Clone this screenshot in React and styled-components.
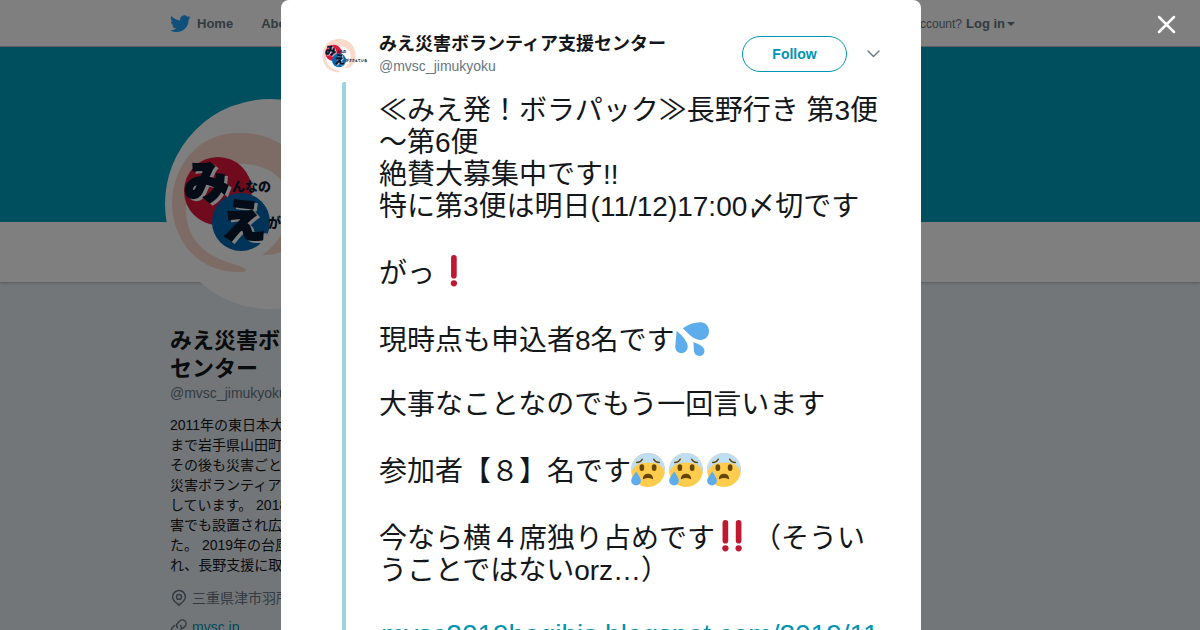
import React from "react";
import styled, { createGlobalStyle } from "styled-components";

const Global = createGlobalStyle`
  *, *::before, *::after { box-sizing: border-box; }
  html, body { margin: 0; height: 100%; overflow: hidden; }
  body {
    background: #e6ecf0;
    color: #14171a;
    font-family: "Liberation Sans", "Noto Sans CJK JP", sans-serif;
    font-size: 14px;
    line-height: 20px;
  }
  a { color: inherit; text-decoration: none; }
  h1, h2, p { margin: 0; }
  button { font: inherit; cursor: pointer; }
`;

const Page = styled.div`
  min-height: 100vh;
`;

const TopBar = styled.header`
  height: 47px;
  background: #fff;
  border-bottom: 1px solid rgba(0, 0, 0, 0.25);
`;

const Container = styled.div`
  width: 100%;
  max-width: 860px;
  margin: 0 auto;
`;

const TopBarInner = styled(Container)`
  display: flex;
  align-items: center;
  justify-content: space-between;
  height: 46px;
  padding: 1px 15px 0 0;
`;

const Nav = styled.nav`
  display: flex;
  gap: 28px;
  color: #66757f;
  font-size: 13px;
  font-weight: bold;
`;

const NavLink = styled.a`
  display: flex;
  align-items: center;
  gap: 6px;
`;

const Session = styled.p`
  display: flex;
  align-items: center;
  gap: 4px;
  color: #66757f;
  font-size: 12px;
`;

const LoginLink = styled.a`
  display: flex;
  align-items: center;
  gap: 2px;
  font-size: 13px;
  font-weight: bold;
`;

const Caret = styled.span`
  border: 4px solid transparent;
  border-top-color: currentColor;
  border-bottom: 0;
`;

const Banner = styled.div`
  height: 175px;
  background: #009ebc;
`;

const ProfileBar = styled.div`
  height: 60px;
  background: #fff;
  box-shadow: 0 1px 3px rgba(0, 0, 0, 0.25);
`;

const AvatarFrame = styled.a`
  display: block;
  position: relative;
  width: 210px;
  height: 210px;
  margin: -183px 0 0 -5px;
  border: 5px solid #fff;
  border-radius: 50%;
  background: #fff;
  overflow: hidden;
`;

const Sidebar = styled.aside`
  width: 270px;
`;

const ProfileName = styled.h1`
  margin-top: 18px;
  font-size: 22px;
  line-height: 28px;
`;

const Handle = styled.a`
  display: block;
  color: #657786;
`;

const Bio = styled.p`
  padding: 12px 0 8px;
  white-space: pre;
`;

const MetaRow = styled.div`
  display: flex;
  align-items: center;
  gap: 4px;
  height: 29px;
  color: #657786;
  white-space: nowrap;
`;

const MetaLink = styled.a`
  color: #0194b3;
`;

const Overlay = styled.div`
  position: fixed;
  inset: 0;
  display: flex;
  justify-content: center;
  background: rgba(0, 0, 0, 0.5);
  padding-left: 2px;
`;

const CloseButton = styled.button`
  position: absolute;
  top: 14px;
  right: 24px;
  display: flex;
  padding: 0;
  border: 0;
  background: none;
`;

const Dialog = styled.article`
  width: 100%;
  max-width: 640px;
  min-height: 100%;
  padding: 32px 40px 0 41px;
  border-radius: 8px 8px 0 0;
  background: #fff;
  overflow: hidden;
`;

const TweetHeader = styled.header`
  display: flex;
  align-items: flex-start;
  height: 48px;
`;

const TweetAvatar = styled.a`
  display: flex;
  width: 48px;
  height: 48px;
  margin-right: 9px;
  border-radius: 50%;
  overflow: hidden;
`;

const Author = styled.div`
  flex: 1;
`;

const AuthorName = styled.h2`
  font-size: 18px;
  line-height: 24px;
`;

const Actions = styled.div`
  display: flex;
  align-items: center;
  gap: 20px;
  padding: 4px 1px 0 0;
`;

const FollowButton = styled.button`
  width: 105px;
  height: 36px;
  padding: 0;
  border: 1px solid #0194b3;
  border-radius: 18px;
  background: #fff;
  color: #0194b3;
  font-weight: bold;
`;

const MenuButton = styled.button`
  display: flex;
  padding: 0;
  border: 0;
  background: none;
  color: #657786;
`;

const Thread = styled.div`
  margin: 2px -10px 0 20px;
  padding: 13px 0 80px 33px;
  border-left: 4px solid #99d4e1;
  border-top-left-radius: 2px;
`;

const TweetText = styled.p`
  font-size: 28px;
  line-height: 32px;
  white-space: pre;
`;

const TweetLink = styled.a`
  margin-left: 2px;
  color: #0194b3;
`;

const Emoji = styled.svg`
  width: 34px;
  height: 34px;
  margin: 0 4px 0 0;
  vertical-align: -6px;
`;

const Lettering = styled.g`
  font-family: "Noto Sans CJK JP", sans-serif;
  font-weight: 900;
  fill: #081830;
`;

const BigKana = styled.text`
  font-size: 45px;
  stroke: #081830;
  stroke-width: 2px;
  filter: drop-shadow(3px 2px 0 #fff);
`;

const SmallKana = styled.text`
  font-size: 13px;
`;

const Bird = () => (
  <svg width="21" height="21" viewBox="0 0 24 24" fill="#1da1f2" aria-hidden="true">
    <path d="M23.64 4.94c-.87.38-1.8.65-2.78.76 1-.6 1.76-1.55 2.12-2.68-.93.56-1.97.96-3.07 1.18A4.84 4.84 0 0 0 11.67 8.6C7.65 8.4 4.09 6.48 1.7 3.55a4.84 4.84 0 0 0 1.5 6.46c-.8-.03-1.54-.25-2.2-.61v.06c0 2.35 1.68 4.3 3.9 4.75-.7.19-1.44.22-2.19.08a4.85 4.85 0 0 0 4.53 3.36A9.73 9.73 0 0 1 .1 19.66 13.7 13.7 0 0 0 7.55 21.84c8.95 0 14-7.5 13.7-14.44.95-.66 1.76-1.5 2.4-2.46z" />
  </svg>
);

const Logo = ({ size }) => (
  <svg width={size} height={size} viewBox="0 0 200 200" role="img" aria-label="みんなのみえ">
    <rect width="200" height="200" fill="#fff" />
    <path fill="#fbd9cb" d="M66 29C114 27 142 60 140 102c-2 30-20 50-48 49 20-14 29-34 27-56C115 68 90 58 62 60 28 62 12 90 17 117c6 28 28 38 50 44 12 4 12 8-2 7C26 166 4 136 2 103 1 63 27 30 66 29Z" />
    <circle cx="48" cy="87" r="34" fill="#e0173a" />
    <circle cx="71" cy="118" r="29" fill="#0066b0" />
    <Lettering>
      <BigKana x="14" y="95">み</BigKana>
      <BigKana x="51" y="134">え</BigKana>
      <SmallKana x="62" y="87">んなの</SmallKana>
      <SmallKana x="98" y="123">がささえている</SmallKana>
    </Lettering>
  </svg>
);

const Exclaim = ({ double }) => (
  <Emoji viewBox="0 0 36 36" fill="#be1931" role="img" aria-label={double ? "!!" : "!"}>
    {(double ? [8, 22] : [17]).map((x) => (
      <g key={x}>
        <rect x={x} y="0" width="6" height="25" rx="3" />
        <circle cx={x + 3} cy="30" r="3.3" />
      </g>
    ))}
  </Emoji>
);

const Drops = () => (
  <Emoji viewBox="0 0 36 36" fill="#5dadec" role="img" aria-label="sweat droplets">
    <path d="M8.200 6.500C14 2.500 20.500.2 27 .3 32.500.4 36 4.700 36 9.500c0 6-4.200 9.900-9.500 9.500C19.500 18.500 14 12 8.200 6.500Z" />
    <path d="M1.7 9.3C7 14 13.500 20.500 13.500 26c0 4-2.800 7-6.600 7C2.600 33 0 29.800.3 25.500.6 20 1.600 14.500 1.700 9.300Z" />
    <path d="M19.300 21.500c4.700 1.200 11.900 4.400 11.900 9.200 0 3-2.300 5.300-5.300 5.300-3.400 0-5.500-2.300-5.900-5.500-.3-2.700.2-6.300-.7-9Z" />
  </Emoji>
);

const AnxiousFace = () => (
  <Emoji viewBox="0 0 36 36" role="img" aria-label="anxious face with sweat">
    <circle cx="18" cy="18" r="18" fill="#ffcc4d" />
    <path fill="#bddef4" d="M0 18C0 8 8 0 18 0s18 8 18 18c0 1-.1 2-.3 3-1.5-8-8-11-17.7-11S2 14 .3 21C.1 20 0 19 0 18Z" />
    <ellipse cx="11.5" cy="15.5" rx="2.5" ry="3.5" fill="#664500" />
    <ellipse cx="24.5" cy="15.5" rx="2.5" ry="3.5" fill="#664500" />
    <path fill="none" stroke="#664500" strokeWidth="1.5" strokeLinecap="round" d="M6 10c3 0 5-1.4 6-3.5M30 10c-3 0-5-1.4-6-3.5" />
    <path fill="#664500" d="M12.5 27c.5-3.500 2.700-5 5.500-5s5 1.500 5.500 5c.1.800-.5 1-1.100.6-2.600-1.600-6.200-1.600-8.800 0-.6.4-1.200.2-1.100-.6Z" />
    <path fill="#5dadec" d="M5.500 19.500c2 3.300 5 6.600 5 9.700a5.200 5.200 0 0 1-10.400 0c0-3.100 3.400-6.400 5.400-9.700Z" />
  </Emoji>
);

const LocationIcon = () => (
  <svg width="18" height="18" viewBox="0 0 24 24" fill="none" stroke="#657786" strokeWidth="2" aria-hidden="true">
    <path d="M12 21.500C9 18.500 3.500 16 3.500 10.500a8.500 8.500 0 0 1 17 0c0 5.500-5.500 8-8.500 11Z" />
    <circle cx="12" cy="10.500" r="3.300" />
  </svg>
);

const LinkIcon = () => (
  <svg width="18" height="18" viewBox="0 0 24 24" fill="none" stroke="#657786" strokeWidth="2" strokeLinecap="round" aria-hidden="true">
    <path d="M10 13a4.500 4.500 0 0 1 0-6l3-3a4.600 4.600 0 0 1 7 7l-3 3" />
    <path d="M14 10a4.500 4.500 0 0 1 0 6l-4 4a4.600 4.600 0 0 1-7-7l3-3" />
  </svg>
);

const bio = [
  "2011年の東日本大震災",
  "まで岩手県山田町を支援",
  "その後も災害ごとに",
  "災害ボランティア支援",
  "しています。 2018年",
  "害でも設置され広島",
  "た。 2019年の台風",
  "れ、長野支援に取り組み",
].join("\n");

export default function App() {
  return (
    <>
      <Global />
      <Page>
        <TopBar>
          <TopBarInner>
            <Nav>
              <NavLink href="#home"><Bird />Home</NavLink>
              <NavLink href="#about">About</NavLink>
            </Nav>
            <Session>
              Have an account?
              <LoginLink href="#login">Log in<Caret /></LoginLink>
            </Session>
          </TopBarInner>
        </TopBar>
        <Banner />
        <ProfileBar />
        <Container>
          <Sidebar>
            <AvatarFrame href="#profile"><Logo size={200} /></AvatarFrame>
            <ProfileName>みえ災害ボランティア支援センター</ProfileName>
            <Handle href="#profile">@mvsc_jimukyoku</Handle>
            <Bio>{bio}</Bio>
            <MetaRow><LocationIcon />三重県津市羽所町</MetaRow>
            <MetaRow><LinkIcon /><MetaLink href="#site">mvsc.jp</MetaLink></MetaRow>
          </Sidebar>
        </Container>
      </Page>
      <Overlay>
        <Dialog role="dialog" aria-label="Tweet">
          <TweetHeader>
            <TweetAvatar href="#profile"><Logo size={48} /></TweetAvatar>
            <Author>
              <AuthorName>みえ災害ボランティア支援センター</AuthorName>
              <Handle href="#profile">@mvsc_jimukyoku</Handle>
            </Author>
            <Actions>
              <FollowButton type="button">Follow</FollowButton>
              <MenuButton type="button" aria-label="More">
                <svg width="13" height="8" viewBox="0 0 13 8" fill="none" stroke="currentColor" strokeWidth="1.4" strokeLinecap="round">
                  <path d="M1 1l5.5 5.5L12 1" />
                </svg>
              </MenuButton>
            </Actions>
          </TweetHeader>
          <Thread>
            <TweetText>
              {"≪みえ発！ボラパック≫長野行き 第3便\n～第6便\n絶賛大募集中です!!\n特に第3便は明日(11/12)17:00〆切です\n\nがっ"}
              <Exclaim />
              {"\n\n現時点も申込者8名です"}
              <Drops />
              {"\n\n大事なことなのでもう一回言います\n\n参加者【８】名です"}
              <AnxiousFace />
              <AnxiousFace />
              <AnxiousFace />
              {"\n\n今なら横４席独り占めです"}
              <Exclaim double />
              {"（そうい\nうことではないorz…）\n\n"}
              <TweetLink href="#article">mvsc2019hagibis.blogspot.com/2019/11</TweetLink>
            </TweetText>
          </Thread>
        </Dialog>
        <CloseButton type="button" aria-label="Close">
          <svg width="20" height="20" viewBox="0 0 20 20" stroke="#fff" strokeWidth="2.5" strokeLinecap="round">
            <path d="M3 3l15 15M18 3L3 18" />
          </svg>
        </CloseButton>
      </Overlay>
    </>
  );
}
